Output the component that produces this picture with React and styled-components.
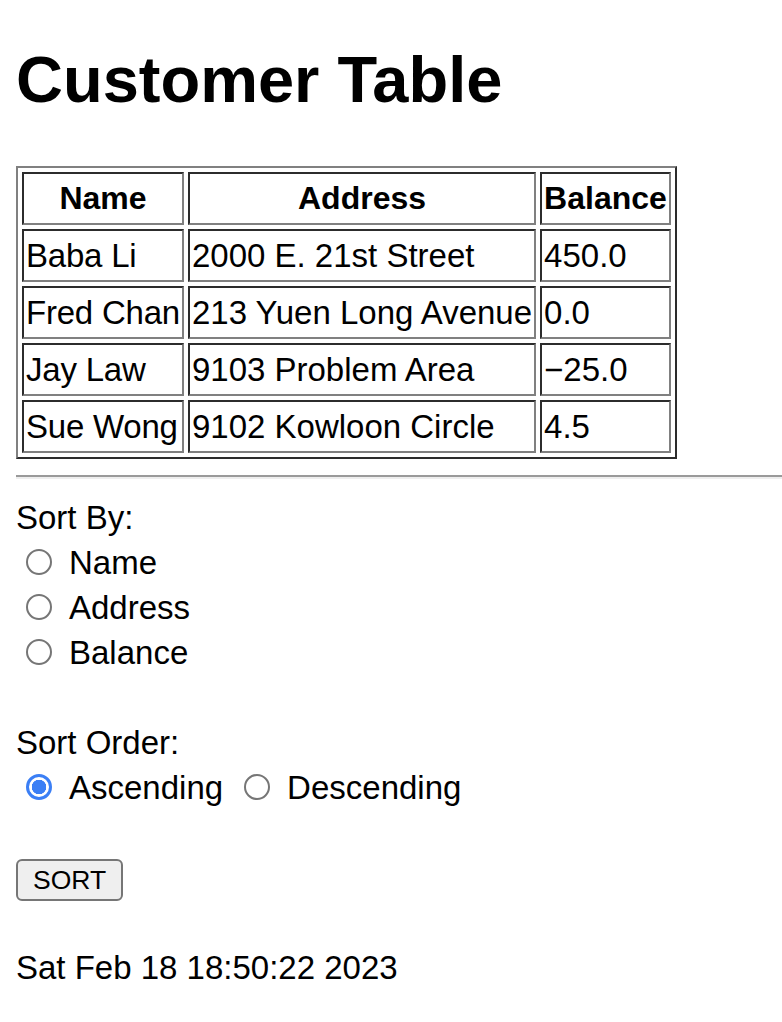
import React, { useState } from "react";
import styled, { createGlobalStyle } from "styled-components";

const GlobalStyle = createGlobalStyle`
  html, body { background: #ffffff; }
  body {
    margin: 0 0 16px 16px;
    font-family: "Liberation Sans", Arial, Helvetica, sans-serif;
    font-size: 33px;
    line-height: 45px;
    color: #000000;
  }
`;

const Title = styled.h1`
  font-size: 65px;
  font-weight: 700;
  line-height: 74px;
  margin: 43px 0 49px;
`;

const Table = styled.table`
  border: 2px outset #808080;
  border-spacing: 4px;
  font-size: 33px;
`;

const HeadCell = styled.th`
  border: 2px inset #808080;
  padding: 2px;
  font-size: 32px;
  font-weight: 700;
  line-height: 45px;
  text-align: center;
  white-space: nowrap;
`;

const Cell = styled.td`
  border: 2px inset #808080;
  padding: 2px;
  line-height: 45px;
  text-align: left;
  white-space: nowrap;
  letter-spacing: ${(p) => (p.$tight ? "-0.22px" : "0")};
`;

const Rule = styled.hr`
  margin: 16px 0;
  border: 0;
  border-top: 2px solid #9a9a9a;
  border-bottom: 2px solid #eeeeee;
`;

const Group = styled.div`
  margin-bottom: ${(p) => (p.$gap ? "45px" : "0")};
`;

const Line = styled.div`
  display: flex;
  align-items: center;
  height: 45px;
  white-space: nowrap;
`;

const Option = styled.label`
  display: inline-flex;
  align-items: center;
  margin-right: 11px;
  cursor: pointer;
`;

const Radio = styled.input.attrs({ type: "radio" })`
  appearance: none;
  box-sizing: border-box;
  width: 26px;
  height: 26px;
  margin: 0 17px 0 10px;
  border: 2px solid #767676;
  border-radius: 50%;
  background: #ffffff;
  position: relative;
  top: -1px;
  &:checked {
    border: 3px solid #3b7ff5;
    background: radial-gradient(circle, #3b7ff5 0 7px, #ffffff 7.5px);
  }
`;

const SortButton = styled.button`
  font-family: "Liberation Sans", Arial, sans-serif;
  font-size: 26.5px;
  line-height: 30px;
  height: 42px;
  padding: 2px 15px;
  background: #efefef;
  border: 2px solid #767676;
  border-radius: 6px;
  color: #000000;
  margin-top: 4px;
`;

const Stamp = styled.div`
  font-size: 33px;
  line-height: 45px;
`;

const rows = [
  { name: "Baba Li", address: "2000 E. 21st Street", balance: "450.0" },
  { name: "Fred Chan", address: "213 Yuen Long Avenue", balance: "0.0" },
  { name: "Jay Law", address: "9103 Problem Area", balance: "\u221225.0" },
  { name: "Sue Wong", address: "9102 Kowloon Circle", balance: "4.5" },
];

export default function App() {
  const [by, setBy] = useState("");
  const [order, setOrder] = useState("asc");
  return (
    <>
      <GlobalStyle />
      <Title>Customer Table</Title>
      <Table>
        <thead>
          <tr>
            <HeadCell>Name</HeadCell>
            <HeadCell>Address</HeadCell>
            <HeadCell>Balance</HeadCell>
          </tr>
        </thead>
        <tbody>
          {rows.map((r) => (
            <tr key={r.name}>
              <Cell $tight>{r.name}</Cell>
              <Cell>{r.address}</Cell>
              <Cell>{r.balance}</Cell>
            </tr>
          ))}
        </tbody>
      </Table>
      <Rule />
      <Group $gap>
        <Line>Sort By:</Line>
        {["Name", "Address", "Balance"].map((k) => (
          <Line key={k}>
            <Option>
              <Radio name="by" checked={by === k} onChange={() => setBy(k)} />
              {k}
            </Option>
          </Line>
        ))}
      </Group>
      <Group $gap>
        <Line>Sort Order:</Line>
        <Line>
          <Option>
            <Radio name="order" checked={order === "asc"} onChange={() => setOrder("asc")} />
            Ascending
          </Option>
          <Option>
            <Radio name="order" checked={order === "desc"} onChange={() => setOrder("desc")} />
            Descending
          </Option>
        </Line>
      </Group>
      <Group $gap>
        <Line>
          <SortButton>SORT</SortButton>
        </Line>
      </Group>
      <Stamp>Sat Feb 18 18:50:22 2023</Stamp>
    </>
  );
}
